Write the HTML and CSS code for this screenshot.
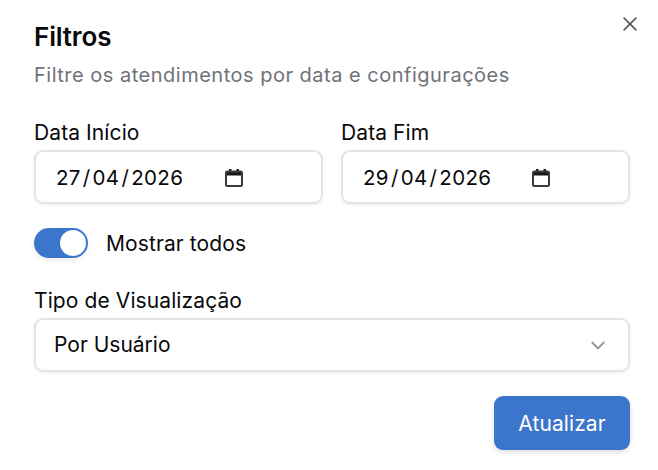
FILE: index.html
```html
<!DOCTYPE html>
<html lang="pt-BR">
<head>
<meta charset="utf-8">
<title>Filtros</title>
<link rel="stylesheet" href="styles.css">
</head>
<body>
<div class="dialog">
  <button class="close" aria-label="Fechar">
    <svg viewBox="0 0 14 14" width="14" height="14"><path d="M.6.6 13.400 13.400M13.400.6.6 13.400"/></svg>
  </button>
  <h1 class="title">Filtros</h1>
  <p class="subtitle">Filtre os atendimentos por data e configurações</p>
  <div class="dates">
    <div class="field">
      <span class="label">Data Início</span>
      <div class="input date">
        <span class="date-text">27<i>/</i>04<i>/</i>2026</span>
        <svg class="cal" viewBox="0 0 18 18" width="18" height="19"><path class="cal-top" d="M1 3h16v4H1zM4 0.5h2.5V3H4zM11.5 0.5H14V3h-2.5z"/><rect class="cal-body" x="1" y="3" width="16" height="14.5" rx="1.5"/></svg>
      </div>
    </div>
    <div class="field">
      <span class="label">Data Fim</span>
      <div class="input date">
        <span class="date-text">29<i>/</i>04<i>/</i>2026</span>
        <svg class="cal" viewBox="0 0 18 18" width="18" height="19"><path class="cal-top" d="M1 3h16v4H1zM4 0.5h2.5V3H4zM11.5 0.5H14V3h-2.5z"/><rect class="cal-body" x="1" y="3" width="16" height="14.5" rx="1.5"/></svg>
      </div>
    </div>
  </div>
  <div class="toggle-row">
    <span class="switch"><span class="knob"></span></span>
    <span class="toggle-label">Mostrar todos</span>
  </div>
  <div class="field">
    <span class="label">Tipo de Visualização</span>
    <div class="input select">
      <span>Por Usuário</span>
      <svg class="chev" viewBox="0 0 14 9" width="14" height="9"><path d="M.7 1 7 7.500 13.300 1"/></svg>
    </div>
  </div>
  <div class="actions"><button class="submit">Atualizar</button></div>
</div>
</body>
</html>
```
FILE: styles.css
```css
* { box-sizing: border-box; }
html, body { margin: 0; height: 100%; background: #fff; }
body { font-family: Inter, "Liberation Sans", sans-serif; color: #09090b; }
.dialog { position: relative; width: 658px; height: 470px; padding: 21px 28px 0 34px; display: flex; flex-direction: column; }
.close { position: absolute; top: 17px; right: 21px; width: 14px; height: 14px; padding: 0; border: 0; background: none; display: flex; }
.close path { stroke: #5a5a5e; stroke-width: 1.6; fill: none; }
.title { margin: 0; font-size: 26px; line-height: 32px; font-weight: 600; letter-spacing: -0.15px; }
.subtitle { margin: 8px 0 0; font-size: 20px; letter-spacing: .5px; line-height: 28px; color: #71717a; }
.dates { display: grid; grid-template-columns: 1fr 1fr; gap: 18px; margin-top: 31px; }
.field { display: flex; flex-direction: column; gap: 4px; }
.label { font-size: 21px; line-height: 26px; font-weight: 400; letter-spacing: .1px; }
.input { height: 54px; border: 2px solid #e4e4e7; border-radius: 9px; background: #fff; box-shadow: 0 1px 3px rgba(0,0,0,.06); font-size: 21px; display: flex; align-items: center; }
.date { padding-left: 20px; }
.date-text { width: 169px; font-size: 20.500px; letter-spacing: .35px; }
.date-text i { font-style: normal; margin: 0 2px; }
.cal { flex: none; }
.cal-top { fill: #18181b; }
.cal-body { fill: none; stroke: #3a3a3d; stroke-width: 2; }
.toggle-row { display: flex; align-items: center; gap: 18px; margin-top: 24px; }
.switch { width: 54px; height: 30px; border-radius: 15px; background: #3b75cc; display: flex; justify-content: flex-end; align-items: center; padding-right: 2px; box-shadow: 0 2px 6px rgba(0,0,0,.08); }
.knob { width: 26px; height: 26px; border-radius: 50%; background: #fff; }
.toggle-label { font-size: 21px; line-height: 28px; font-weight: 400; letter-spacing: .1px; padding-top: 2px; }
.toggle-row + .field { margin-top: 30px; }
.select { padding: 0 23px 2px 18px; justify-content: space-between; }
.chev { margin-top: 2px; }
.chev path { fill: none; stroke: #949497; stroke-width: 1.8; }
.actions { display: flex; justify-content: flex-end; margin-top: 24px; }
.submit { width: 136px; height: 54px; border: 0; border-radius: 9px; background: #3b75cc; color: #fff; font: 400 21px Inter, "Liberation Sans", sans-serif; letter-spacing: .1px; box-shadow: 0 2px 5px rgba(0,0,0,.14); }
```
